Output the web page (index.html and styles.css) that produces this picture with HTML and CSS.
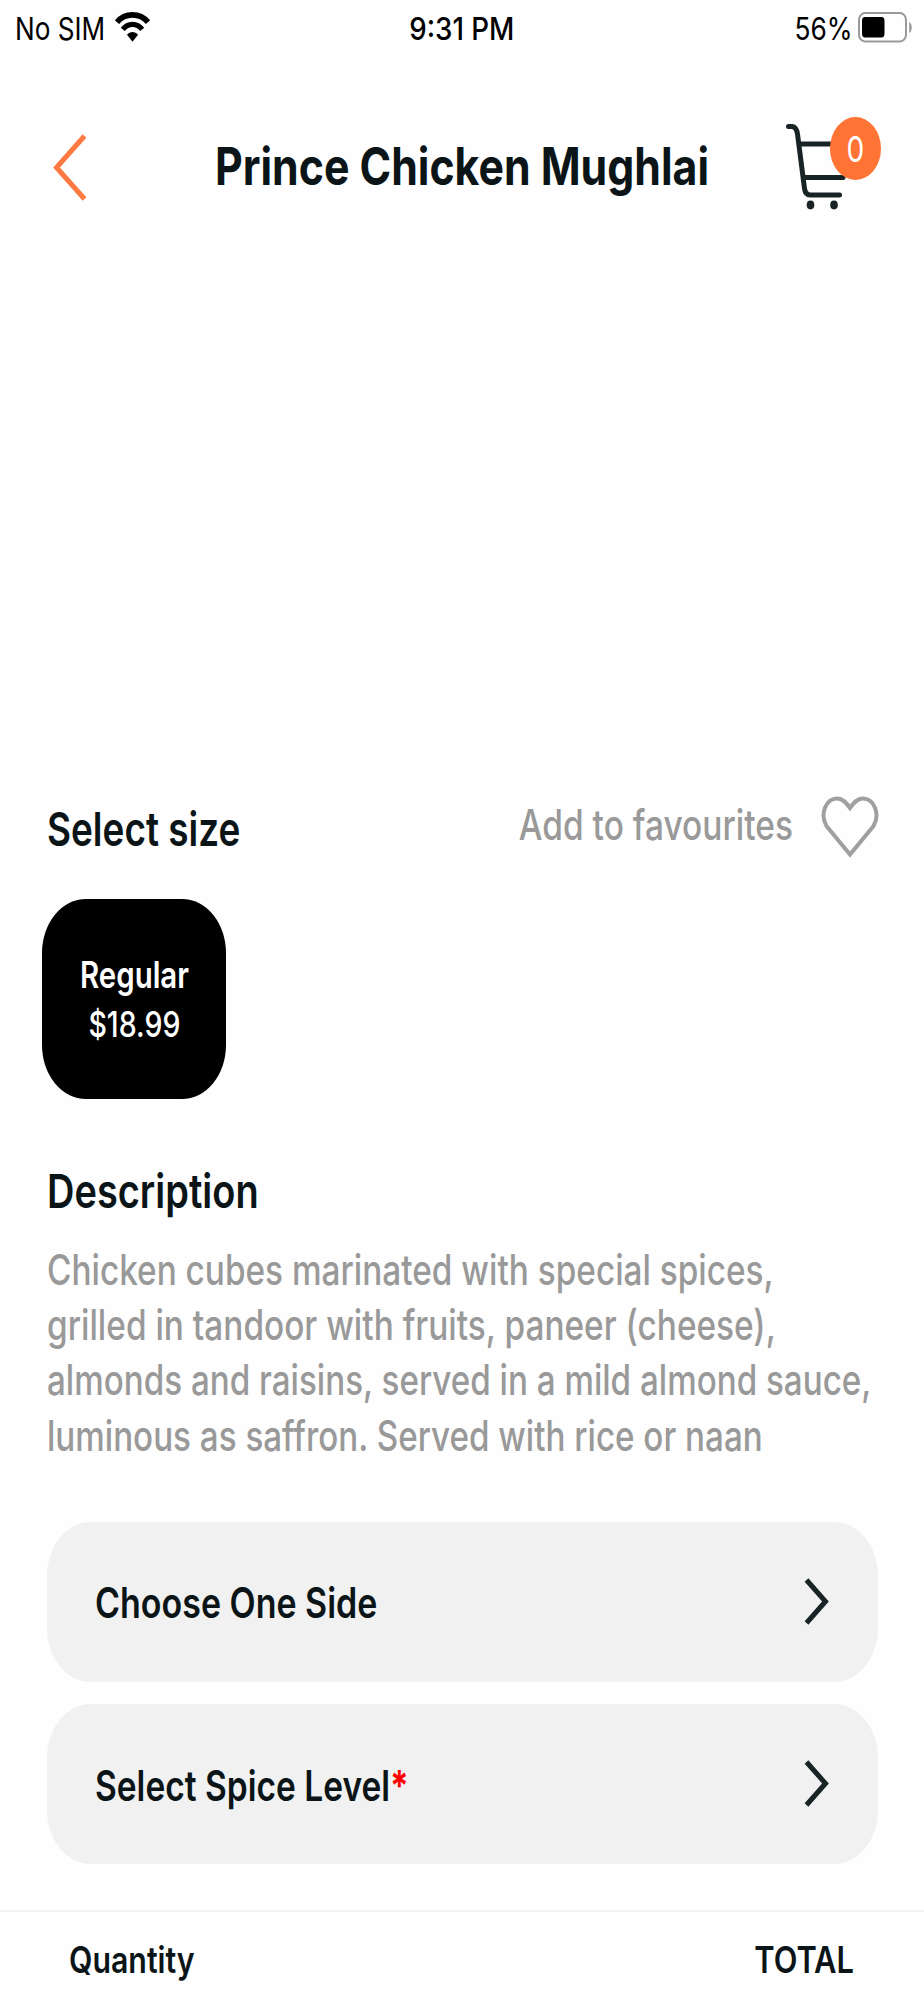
FILE: index.html
```html
<!DOCTYPE html>
<html lang="en">
<head>
<meta charset="utf-8">
<title>Prince Chicken Mughlai</title>
<link rel="stylesheet" href="styles.css">
</head>
<body>
<div class="screen">
  <div class="status">
    <div class="status-left">
      <span class="label carrier">No SIM</span>
      <svg class="wifi" width="35" height="32" viewBox="0 0 35 32" fill="none" stroke="#000">
        <path d="M2 11.2C10 1.4 25 1.4 33 11.2" stroke-width="5.6"/>
        <path d="M7.8 18.4C13 11.6 22 11.6 27.2 18.4" stroke-width="5.2"/>
        <path d="M12 23.8C15 20.2 20 20.2 23 23.8L17.500 30.800Z" fill="#000" stroke="none"/>
      </svg>
    </div>
    <span class="label time">9:31 PM</span>
    <div class="status-right">
      <span class="label percent">56%</span>
      <svg class="battery" width="56" height="32" viewBox="0 0 56 32">
        <rect x="2" y="2" width="47" height="28.500" rx="6" ry="7" fill="none" stroke="#999" stroke-width="2"/>
        <rect x="5" y="6" width="22.500" height="20.500" rx="3" ry="4" fill="#000"/>
        <path d="M52.200 11C55.600 12.500 55.600 20.500 52.200 22Z" fill="#999"/>
      </svg>
    </div>
  </div>

  <header class="header">
    <svg class="back" width="36" height="70" viewBox="0 0 36 70" fill="none" stroke="#ff7a43" stroke-width="5">
      <path d="M32.500 3L4.500 34.500L32.500 66"/>
    </svg>
    <h1 class="label title">Prince Chicken Mughlai</h1>
    <div class="cart">
      <svg width="62" height="94" viewBox="0 0 62 94" fill="none" stroke="#182326" stroke-width="5" stroke-linecap="round">
        <path d="M4.500 9.500H8Q12.500 10 13.500 17L20.500 71.500Q21.500 78 26 78H55.500"/>
        <path d="M15.500 27H57M19.500 60.500H59"/>
        <ellipse cx="26.500" cy="88" rx="3.800" ry="4.400" fill="#182326" stroke="none"/>
        <ellipse cx="50" cy="88" rx="3.800" ry="4.400" fill="#182326" stroke="none"/>
      </svg>
      <span class="badge"><span class="label">0</span></span>
    </div>
  </header>

  <div class="photo"></div>

  <main class="content">
    <div class="size-row">
      <h2 class="label heading select-size">Select size</h2>
      <div class="favourite">
        <span class="label fav-text">Add to favourites</span>
        <svg class="heart" width="58" height="64" viewBox="0 0 58 64" fill="none" stroke="#a0a0a0" stroke-width="4">
          <path d="M29 59.500L5.500 31C-1.500 19 5 3.500 16 3.500C22 3.500 25.500 8 29 13C32.500 8 36 3.500 42 3.500C53 3.500 59.500 19 52.500 31Z"/>
        </svg>
      </div>
    </div>

    <div class="size-card">
      <span class="label size-name">Regular</span>
      <span class="label size-price">$18.99</span>
    </div>

    <h2 class="label heading desc-title">Description</h2>
    <p class="desc">
      <span class="label line1">Chicken cubes marinated with special spices,</span>
      <span class="label line2">grilled in tandoor with fruits, paneer (cheese),</span>
      <span class="label line3">almonds and raisins, served in a mild almond sauce,</span>
      <span class="label line4">luminous as saffron. Served with rice or naan</span>
    </p>

    <div class="options">
      <div class="option">
        <span class="label side">Choose One Side</span>
        <svg width="26" height="50" viewBox="0 0 26 50" fill="none" stroke="#182326" stroke-width="5"><path d="M2.500 3L21.500 24.500L2.500 46"/></svg>
      </div>
      <div class="option">
        <span class="label spice">Select Spice Level<span class="required">*</span></span>
        <svg width="26" height="50" viewBox="0 0 26 50" fill="none" stroke="#182326" stroke-width="5"><path d="M2.500 3L21.500 24.500L2.500 46"/></svg>
      </div>
    </div>
  </main>

  <footer class="footer">
    <span class="label quantity">Quantity</span>
    <span class="label total">TOTAL</span>
  </footer>
</div>
</body>
</html>
```
FILE: styles.css
```css
* { box-sizing: border-box; }

body {
  margin: 0;
  background: #fefefe;
  color: #0b1517;
  font-family: Inter, "Liberation Sans", sans-serif;
}

.screen {
  width: 924px;
  height: 2000px;
  overflow: hidden;
  display: flex;
  flex-direction: column;
}

/* Condensed lettering: --fit is the horizontal scale of each label */
.label {
  display: block;
  margin: 0;
  white-space: nowrap;
  transform: scaleX(var(--fit, 0.8));
  transform-origin: left center;
}

.status {
  height: 57px;
  flex: none;
  display: grid;
  grid-template-columns: 1fr auto 1fr;
  align-items: center;
  padding: 0 11px 0 15px;
  font-size: 31.5px;
  color: #000;
}
.status-left, .status-right { display: flex; align-items: center; }
.status-right { justify-content: flex-end; }
.carrier { --fit: 0.83; width: 100px; }
.time { --fit: 0.88; font-weight: 500; transform-origin: center; margin-right: 4px; }
.percent { --fit: 0.835; transform-origin: right center; margin-right: 4px; }
.wifi, .battery { flex: none; margin-bottom: 3px; }

.header {
  height: 217px;
  flex: none;
  display: flex;
  align-items: center;
  justify-content: space-between;
  padding: 0 43px 0 52px;
}
.back { margin-top: 4px; flex: none; width: 36px; }
.title {
  --fit: 0.823;
  flex: 1;
  display: flex;
  justify-content: center;
  margin: 2px -25px 0 27px;
  font-size: 52px;
  font-weight: 650;
  transform-origin: center;
}
.cart { position: relative; width: 97px; height: 94px; margin-bottom: 4px; flex: none; }
.badge {
  position: absolute;
  left: 46px;
  top: 0;
  width: 51px;
  height: 63px;
  border-radius: 50%;
  background: #ff7334;
  color: #fff;
  font-size: 36px;
  display: flex;
  align-items: center;
  justify-content: center;
}
.badge .label { --fit: 0.78; transform-origin: center; margin-right: 1px; margin-top: 2px; }

.photo { height: 516px; flex: none; }

.content { padding: 0 46px 0 47px; }

.size-row { height: 76px; display: flex; align-items: center; justify-content: space-between; }
.heading { font-size: 47px; font-weight: 600; }
.select-size { --fit: 0.786; }
.favourite { display: flex; align-items: center; gap: 28px; margin: -7px -1px 0 0; }
.fav-text { --fit: 0.797; font-size: 42px; font-weight: 450; color: #999; transform-origin: right center; }
.heart { margin-top: 4px; }

.size-card {
  width: 184px;
  height: 200px;
  margin: 32.5px 0 0 -5px;
  padding: 2px 0 0 1px;
  border-radius: 44px / 54px;
  background: #000;
  color: #fff;
  display: flex;
  flex-direction: column;
  align-items: center;
  justify-content: center;
  line-height: 49.5px;
}
.size-card .label { transform-origin: center; }
.size-name { --fit: 0.795; font-size: 37px; font-weight: 600; }
.size-price { --fit: 0.815; font-size: 35px; font-weight: 450; }

.desc-title { --fit: 0.808; margin-top: 62.5px; line-height: 60px; }
.desc { margin: 21px 0 0; font-size: 42px; font-weight: 450; line-height: 55.2px; color: #999; }
.line1 { --fit: 0.794; }
.line2 { --fit: 0.795; }
.line3 { --fit: 0.79; }
.line4 { --fit: 0.79; }

.options { display: flex; flex-direction: column; gap: 22.5px; margin-top: 59px; }
.option {
  height: 160px;
  border-radius: 44px / 54px;
  background: #f1f1f1;
  display: flex;
  align-items: center;
  justify-content: space-between;
  padding: 0 48px 0 48px;
  font-size: 42px;
  font-weight: 600;
}
.option .label { margin-top: 2px; }
.side { --fit: 0.809; }
.spice { --fit: 0.798; }
.required { color: #f00; font-weight: 700; }

.footer {
  height: 90px;
  flex: none;
  margin-top: auto;
  border-top: 2px solid #f1f1f1;
  padding: 8px 70px 0 69px;
  display: flex;
  align-items: center;
  justify-content: space-between;
  font-size: 36.5px;
  font-weight: 600;
}
.quantity { --fit: 0.83; }
.total { --fit: 0.845; transform-origin: right center; }
```
